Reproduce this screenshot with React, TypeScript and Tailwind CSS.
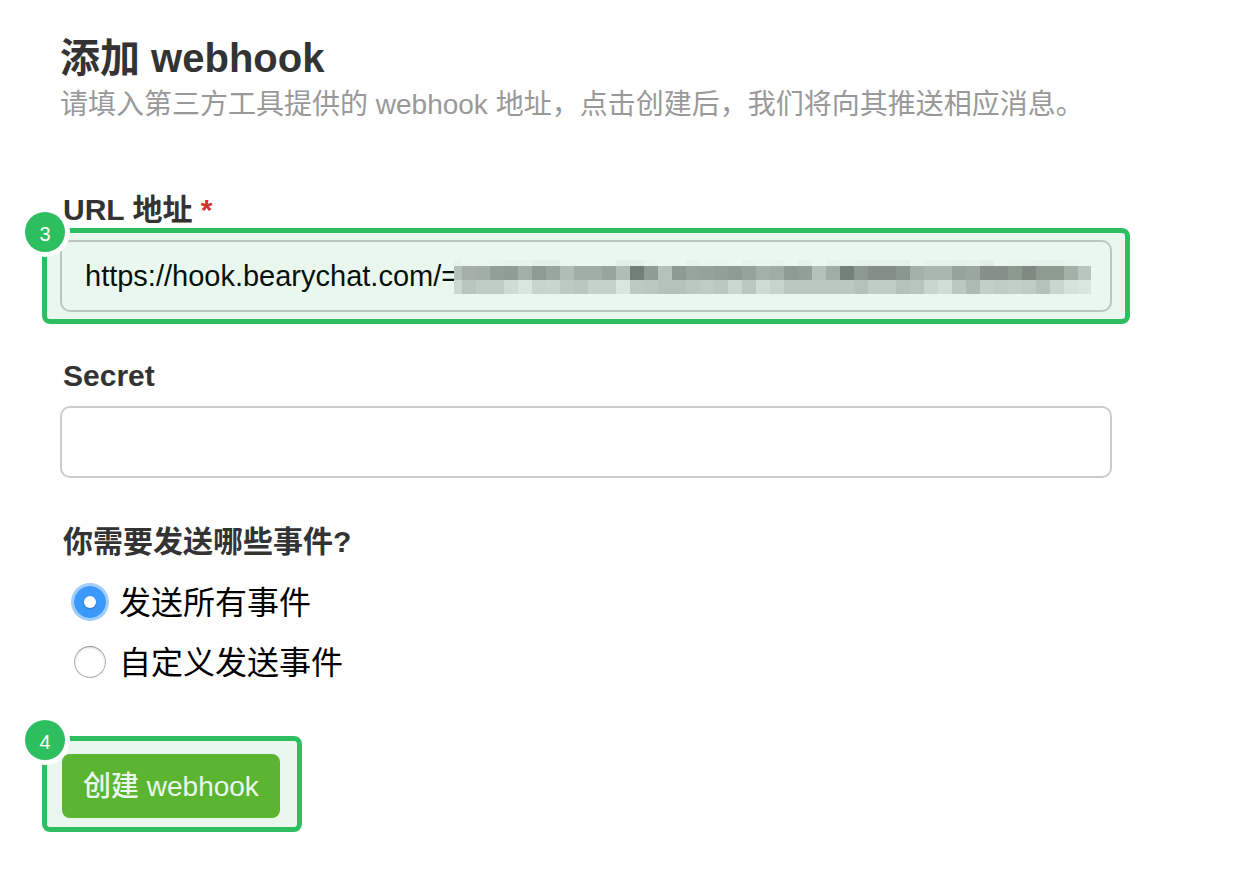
import { useState, type ReactNode } from "react";

const CELL = 14;

// Rows of the mosaic that hides the private part of the webhook address.
const TOP_ROW =
  "e5f3eb eaf7ee e9f6ed e8f5ed e6f3eb e6f3eb e2efe7 e2efe7 eaf7ee eaf7ee eaf7ee e9f6ed e2efe7 e2efe7 e8f5ed eaf7ee eaf7ee e5f2ea e8f5ed e8f5ed eaf7ee e6f3eb e8f5ed e6f3eb eaf7ee e5f2ea eaf7ee e6f3eb e7f4ec e5f2ea e4f1e9 e4f1e9 e4f1e9 eaf7ee e6f3eb e6f3eb e4f1e9 e6f3eb e1eee6 eaf7ee e8f5ed e7f4ec e5f2ea e5f2ea e7f4ec eaf7ee".split(" ");
const MIDDLE_ROW =
  "b3c1b9 a3afa7 a1aea6 929f96 909d94 a2afa7 8e9b92 99a69e b1beb6 a1aea6 9fada4 98a59d b1beb6 717f76 8e9c93 b5c2b9 8c9a91 97a49b 94a299 919f96 8e9b92 95a39a a3b0a8 9fada4 8e9b92 929f96 b3c1b8 9fada4 748078 8c9990 848f87 848f87 8a978e a3b0a7 a9b6ad a9b6ad 96a39a 9ba89f 859188 859188 8c998f 7f8b82 8e9b91 8e9b91 a3b0a7 b7c5bc".split(" ");
const BOTTOM_ROW =
  "cbd8d0 b8c5bd bfccc4 bfccc4 cfdcd4 d9e6de c7d4cb c9d6cd bccac1 bac7bf c5d2ca c5d2ca d9e6de bdcac2 bac8bf b5c2ba b5c2ba bac8bf bfccc4 bac8bf cad7cf bac8bf cfdcd4 c7d4cc bac8bf bac8bf bac8bf bac8bf bac8bf b5c2b9 c0cdc5 c0cdc5 b5c2b9 b8c5bc c9d6ce d1ded6 bac8bf adbab2 c2cfc7 bfccc4 c2cfc7 bfccc4 b5c2b9 c9d6ce d5e2da d9e6de".split(" ");

const ROWS = [
  { y: 0, height: 6, colors: TOP_ROW },
  { y: 6, height: 14, colors: MIDDLE_ROW },
  { y: 20, height: 14, colors: BOTTOM_ROW },
];

function Mosaic() {
  return (
    <svg
      width="637"
      height="34"
      viewBox="6 0 637 34"
      shapeRendering="crispEdges"
      aria-hidden="true"
      className="pointer-events-none absolute top-5 left-[394px]"
    >
      {ROWS.map((row) =>
        row.colors.map((color, i) => (
          <rect key={`${row.y}-${i}`} x={i * CELL} y={row.y} width={CELL} height={row.height} fill={`#${color}`} />
        )),
      )}
    </svg>
  );
}

function Step({ number, className, children }: { number: number; className: string; children: ReactNode }) {
  return (
    <div className={`relative rounded-lg border-[5px] border-[#2dbe60] bg-[#eaf7ee] ${className}`}>
      {children}
      <span className="absolute -top-[21px] -left-[22px] flex size-10 items-center justify-center rounded-full bg-[#2dbe60] pt-1 text-[20px] leading-none text-white ring-5 ring-white">
        {number}
      </span>
    </div>
  );
}

function EventOption({
  value,
  label,
  selected,
  onSelect,
}: {
  value: string;
  label: string;
  selected: string;
  onSelect: (value: string) => void;
}) {
  return (
    <label className="flex h-15 items-center gap-[13px] text-[32px] text-black">
      <input
        type="radio"
        name="events"
        value={value}
        checked={selected === value}
        onChange={() => onSelect(value)}
        className="grid size-8 shrink-0 appearance-none place-content-center rounded-full border border-[#b0b0b0] border-t-[#939393] bg-white shadow-[inset_0_1px_2px_rgba(0,0,0,0.15)] before:size-3 before:rounded-full before:content-[''] checked:border-[#3b99fc] checked:bg-[#3b99fc] checked:shadow-none checked:ring-3 checked:ring-[#a1cdfb] checked:before:bg-white checked:before:shadow-[0_1px_2px_rgba(0,0,0,0.25)]"
      />
      <span className="pt-0.5">{label}</span>
    </label>
  );
}

export default function App() {
  const [url, setUrl] = useState("https://hook.bearychat.com/=");
  const [secret, setSecret] = useState("");
  const [events, setEvents] = useState("all");

  return (
    <main className="min-h-screen bg-white pt-[34px] pr-[114px] pb-12 pl-[42px] font-['Liberation_Sans','Noto_Sans_CJK_SC',sans-serif] text-[#333]">
      <header className="pl-[18px]">
        <h1 className="text-[40px] leading-[48px] font-bold">添加 webhook</h1>
        <p className="text-[28px] leading-[46px] text-[#999]">
          请填入第三方工具提供的 webhook 地址，点击创建后，我们将向其推送相应消息。
        </p>
      </header>

      <form className="mt-16" onSubmit={(e) => e.preventDefault()}>
        <label htmlFor="url" className="block pl-[21px] text-[30px] leading-9 font-bold">
          URL 地址 <span className="text-[#d0342c]">*</span>
        </label>
        <Step number={3} className="px-[13px] py-[7px]">
          <div className="relative">
            <input
              id="url"
              type="text"
              required
              value={url}
              onChange={(e) => setUrl(e.target.value)}
              className="block h-18 w-full rounded-[10px] border-2 border-[#bbc7be] bg-transparent px-[23px] text-[29px] text-[#04120a] outline-none"
            />
            <Mosaic />
          </div>
        </Step>

        <label htmlFor="secret" className="mt-[34px] block pl-[21px] text-[30px] leading-9 font-bold">
          Secret
        </label>
        <div className="mt-3 px-[18px]">
          <input
            id="secret"
            type="text"
            value={secret}
            onChange={(e) => setSecret(e.target.value)}
            className="block h-18 w-full rounded-[10px] border-2 border-[#ccc] bg-white px-[23px] text-[29px] text-black outline-none"
          />
        </div>

        <fieldset className="mt-[46px]">
          <legend className="pl-[21px] text-[30px] leading-9 font-bold">你需要发送哪些事件?</legend>
          <div className="pt-3 pl-8">
            <EventOption value="all" label="发送所有事件" selected={events} onSelect={setEvents} />
            <EventOption value="custom" label="自定义发送事件" selected={events} onSelect={setEvents} />
          </div>
        </fieldset>

        <Step number={4} className="mt-11 w-fit pt-[13px] pr-[17px] pb-[9px] pl-[15px]">
          <button
            type="submit"
            className="block h-16 rounded-lg bg-[#5cb531] px-[21px] pt-0.5 text-[28px] font-medium text-[#eaf7ee]"
          >
            创建 webhook
          </button>
        </Step>
      </form>
    </main>
  );
}
